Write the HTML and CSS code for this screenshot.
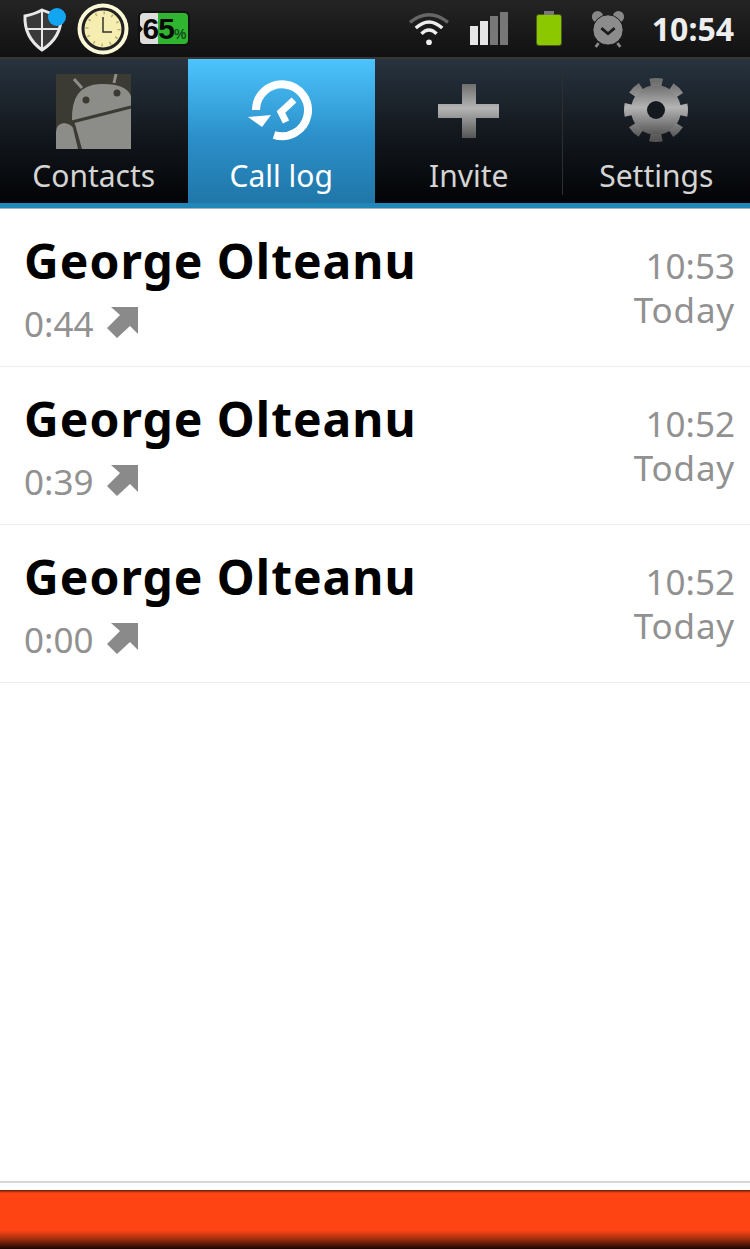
FILE: index.html
```html
<!DOCTYPE html>
<html lang="en">
<head>
    <meta charset="UTF-8">
    <meta name="viewport" content="width=device-width, initial-scale=1.0">
    <title>Call log</title>
    <link rel="stylesheet" href="styles.css">
</head>
<body>

<div class="statusbar">
    <div class="status-group left">
        <svg width="46" height="48" viewBox="0 0 46 48">
            <path d="M4 11 Q14 9 21 5 Q30 9 40 11 Q41 32 21 45 Q3 32 4 11Z" fill="#3a3a3a" stroke="#e8e8e8" stroke-width="3"/>
            <path d="M21 6V44M4 24H39" stroke="#e8e8e8" stroke-width="2"/>
            <circle cx="36" cy="12" r="9" fill="#12a5f2"/>
        </svg>
        <svg width="52" height="52" viewBox="0 0 52 52">
            <circle cx="26" cy="26" r="25.500" fill="#fbf8d8"/>
            <circle cx="26" cy="26" r="20" fill="#f6eeb0" stroke="#222" stroke-width="3"/>
            <circle cx="26" cy="26" r="16" fill="none" stroke="#b5ad80" stroke-width="3" stroke-dasharray="1.500 6.880"/>
            <path d="M26 14V29H35" fill="none" stroke="#333" stroke-width="1.500"/>
        </svg>
        <div class="batt-pct">
            <span class="batt-num">65<small>%</small></span>
        </div>
    </div>
    <div class="status-group right">
        <svg class="wifi" width="44" height="36" viewBox="0 0 46 38">
            <path d="M3 12 Q23 -4 43 12" fill="none" stroke="#666" stroke-width="3.500"/>
            <path d="M9 18 Q23 5 37 18" fill="none" stroke="#eee" stroke-width="3.500"/>
            <path d="M15 24 Q23 16 31 24" fill="none" stroke="#eee" stroke-width="3.500"/>
            <circle cx="23" cy="33" r="3" fill="#eee"/>
        </svg>
        <div class="signal">
            <i class="on h1"></i><i class="on h2"></i><i class="h3"></i><i class="h4"></i>
        </div>
        <div class="battery"><span></span></div>
        <svg width="36" height="40" viewBox="0 0 38 40">
            <circle cx="8" cy="7" r="6" fill="#888"/>
            <circle cx="30" cy="7" r="6" fill="#888"/>
            <path d="M9 35L6 39M29 35L32 39" stroke="#888" stroke-width="3"/>
            <circle cx="19" cy="21" r="16" fill="#8c8c8c" stroke="#111" stroke-width="1"/>
            <path d="M12 19L19 25L26 19" fill="none" stroke="#1c1c1c" stroke-width="3"/>
        </svg>
        <span class="clock-text">10:54</span>
    </div>
</div>

<div class="tabs">
    <div class="tab">
        <svg class="tab-icon" width="76" height="76" viewBox="0 0 76 76">
            <rect width="75" height="75" fill="#3b3a33"/>
            <path d="M18 5L26 14M60 0L58 9" stroke="#8c8c88" stroke-width="3"/>
            <path d="M16 46 Q15 11 44 10 Q70 9 75 22V75H26L19 50Z" fill="#8c8c88"/>
            <path d="M0 75V58Q0 50 8 49Q15 50 17 54L22 75Z" fill="#8c8c88"/>
            <path d="M16 48L75 33" fill="none" stroke="#3b3a33" stroke-width="3"/>
            <circle cx="30" cy="26" r="3.500" fill="#3b3a33"/>
            <circle cx="61" cy="19" r="3.500" fill="#3b3a33"/>
        </svg>
        <span class="tab-label">Contacts</span>
    </div>
    <div class="tab active">
        <svg class="tab-icon" width="76" height="76" viewBox="0 0 76 76">
            <path d="M31 61A26 26 0 1 0 13 36" fill="none" stroke="#fff" stroke-width="8"/>
            <path d="M19 53L5 43L28 41Z" fill="#fff"/>
            <path d="M51 26L38 38L43 48" fill="none" stroke="#fff" stroke-width="7"/>
        </svg>
        <span class="tab-label">Call log</span>
    </div>
    <div class="tab sep">
        <svg class="tab-icon" width="76" height="76" viewBox="0 0 76 76">
            <defs>
                <linearGradient id="metal" x1="0" y1="0" x2="0" y2="1">
                    <stop offset="0" stop-color="#6e6e6e"/>
                    <stop offset="0.45" stop-color="#b4b4b4"/>
                    <stop offset="1" stop-color="#555"/>
                </linearGradient>
            </defs>
            <path d="M31 10H45V30H68V44H45V64H31V44H7V30H31Z" fill="url(#metal)"/>
        </svg>
        <span class="tab-label">Invite</span>
    </div>
    <div class="tab">
        <svg class="tab-icon" width="76" height="76" viewBox="0 0 76 76">
            <circle cx="38" cy="36" r="25" fill="url(#metal)"/>
            <circle cx="38" cy="36" r="28" fill="none" stroke="url(#metal)" stroke-width="8" stroke-dasharray="12 9.990" stroke-dashoffset="6"/>
            <circle cx="38" cy="36" r="9" fill="#14191f"/>
        </svg>
        <span class="tab-label">Settings</span>
    </div>
</div>
<div class="tab-line"></div>

<ul class="calls">
    <li class="call">
        <div class="call-info">
            <div class="call-name">George Olteanu</div>
            <div class="call-meta">0:44
                <svg class="call-arrow" width="32" height="32" viewBox="0 0 32 32"><path d="M4 0H31V27L23 19L10 31L0 21L13 8Z" fill="#8a8a8a"/></svg>
            </div>
        </div>
        <div class="call-when"><div>10:53</div><div class="day">Today</div></div>
    </li>
    <li class="call">
        <div class="call-info">
            <div class="call-name">George Olteanu</div>
            <div class="call-meta">0:39
                <svg class="call-arrow" width="32" height="32" viewBox="0 0 32 32"><path d="M4 0H31V27L23 19L10 31L0 21L13 8Z" fill="#8a8a8a"/></svg>
            </div>
        </div>
        <div class="call-when"><div>10:52</div><div class="day">Today</div></div>
    </li>
    <li class="call">
        <div class="call-info">
            <div class="call-name">George Olteanu</div>
            <div class="call-meta">0:00
                <svg class="call-arrow" width="32" height="32" viewBox="0 0 32 32"><path d="M4 0H31V27L23 19L10 31L0 21L13 8Z" fill="#8a8a8a"/></svg>
            </div>
        </div>
        <div class="call-when"><div>10:52</div><div class="day">Today</div></div>
    </li>
</ul>

<div class="footer">
    <div class="footer-line"></div>
    <div class="footer-bar"></div>
</div>

</body>
</html>
```

FILE: styles.css
```css
html, body {
    height: 100%;
}
body {
    font-family: "Noto Sans", "Open Sans", sans-serif;
    background-color: #fff;
    margin: 0;
    display: flex;
    flex-direction: column;
    overflow: hidden;
}
.statusbar {
    height: 59px;
    flex: none;
    display: flex;
    justify-content: space-between;
    align-items: center;
    background: linear-gradient(#242424, #111);
    border-bottom: 2px solid #3a3532;
    box-sizing: border-box;
}
.status-group {
    display: flex;
    align-items: center;
}
.status-group.left {
    padding-left: 21px;
    gap: 10px;
}
.status-group.right {
    padding-right: 16px;
    gap: 28px;
}
.wifi {
    margin-right: -9px;
}
.batt-pct {
    width: 52px;
    height: 35px;
    margin-left: -1px;
    box-sizing: border-box;
    border: 2px solid #111;
    border-radius: 6px;
    background: linear-gradient(90deg, #ddd 0, #ddd 38%, #2fb52f 38%, #2fb52f 100%);
    display: flex;
    align-items: center;
    justify-content: center;
    position: relative;
}
.batt-pct::before {
    content: "";
    position: absolute;
    left: -2px;
    top: 10px;
    border-left: 5px solid #111;
    border-top: 6px solid transparent;
    border-bottom: 6px solid transparent;
}
.batt-num {
    font-family: "Liberation Sans", sans-serif;
    font-size: 30px;
    font-weight: bold;
    color: #0b0b0b;
    line-height: 1;
    letter-spacing: -1px;
}
.batt-num small {
    font-size: 14px;
    color: #14501a;
}
.signal {
    display: flex;
    align-items: flex-end;
    gap: 2px;
    height: 33px;
}
.signal i {
    width: 8px;
    display: block;
    background: #777;
}
.signal i.on {
    background: #e6e6e6;
}
.signal .h1 { height: 19px; }
.signal .h2 { height: 24px; }
.signal .h3 { height: 29px; }
.signal .h4 { height: 33px; }
.battery {
    width: 26px;
    height: 35px;
    box-sizing: border-box;
    padding-top: 3px;
    display: flex;
    position: relative;
}
.battery span {
    flex: 1;
    background: #8cc800;
    border: 1px solid #4a5a22;
    border-radius: 3px;
}
.battery::before {
    content: "";
    position: absolute;
    top: 0;
    left: 8px;
    width: 10px;
    height: 4px;
    background: #777;
}
.clock-text {
    font-size: 32px;
    font-weight: bold;
    color: #eee;
    line-height: 1;
    margin-left: -2px;
}
.tabs {
    height: 144px;
    flex: none;
    display: flex;
    background: linear-gradient(#27333f, #14191f 50%, #020305);
}
.tab {
    flex: 1;
    display: flex;
    flex-direction: column;
    align-items: center;
    padding-top: 15px;
    box-sizing: border-box;
    color: #d4d4d4;
}
.tab.active {
    background: linear-gradient(#4cc4fd, #2b8fc8 55%, #2076a8);
    color: #fff;
}
.tab.sep {
    position: relative;
}
.tab.sep::after {
    content: "";
    position: absolute;
    right: 0;
    top: 9px;
    bottom: 8px;
    width: 1px;
    background: #2a2f34;
}
.tab-icon {
    flex: none;
}
.tab-label {
    font-size: 30px;
    line-height: 36px;
    margin-top: 8px;
}
.tab-line {
    height: 6px;
    flex: none;
    background: #1f88b8;
    border-bottom: 1px solid #a8b4ba;
    box-sizing: border-box;
}
.calls {
    list-style: none;
    margin: 0;
    padding: 0;
    flex: 1;
}
.call {
    height: 158px;
    box-sizing: border-box;
    display: flex;
    justify-content: space-between;
    padding: 21px 15px 0 24px;
    border-bottom: 1px solid #ececec;
}
.call-name {
    font-size: 48px;
    font-weight: bold;
    line-height: 62px;
    letter-spacing: 1px;
    color: #000;
}
.call-meta {
    display: flex;
    align-items: center;
    gap: 14px;
    font-size: 35px;
    line-height: 48px;
    color: #919191;
    margin-top: 8px;
}
.call-arrow {
    margin-top: -3px;
}
.call-when {
    font-size: 35px;
    line-height: 45px;
    color: #919191;
    text-align: right;
    padding-top: 13px;
}
.day {
    margin-top: -1px;
    letter-spacing: 0.800px;
}
.footer {
    flex: none;
}
.footer-line {
    height: 2px;
    background: #d6d6d6;
    margin-bottom: 7px;
}
.footer-bar {
    height: 59px;
    background: linear-gradient(#5e1c08 0, #ff4414 3px, #ff4414 68%, #a83010 82%, #1a0500 100%);
}
```
